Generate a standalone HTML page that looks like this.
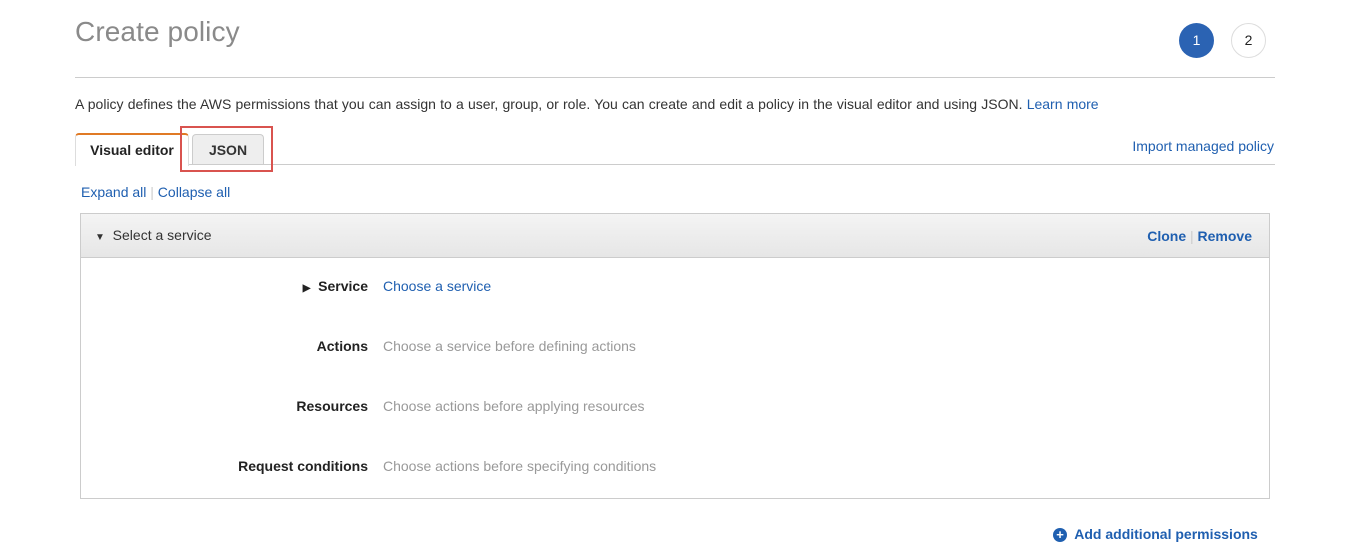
<!DOCTYPE html>
<html><head><style>
body{margin:0;width:1364px;height:538px;overflow:hidden;background:#fff;font-family:"Liberation Sans",Arial,sans-serif;font-size:14px;color:#444;position:relative}
.a{position:absolute;white-space:nowrap}
.l{color:#1f5fb0}
</style></head><body>
<div class="a" style="left:75px;top:16px;font-size:28px;color:#8a8a8a;letter-spacing:0.1px">Create policy</div>
<div class="a" style="left:1179px;top:23px;width:35px;height:35px;border-radius:50%;background:#2b63b3;color:#fff;font-size:14px;text-align:center;line-height:35px">1</div>
<div class="a" style="left:1231px;top:23px;width:33px;height:33px;border-radius:50%;border:1px solid #ddd;color:#222;font-size:14px;text-align:center;line-height:33px">2</div>
<div class="a" style="left:75px;top:77px;width:1200px;height:1px;background:#ccc"></div>
<div class="a" style="left:75px;top:96px;color:#333;word-spacing:0.3px">A policy defines the AWS permissions that you can assign to a user, group, or role. You can create and edit a policy in the visual editor and using JSON. <span class="l">Learn more</span></div>
<div class="a" style="left:75px;top:164px;width:1200px;height:1px;background:#ccc"></div>
<div class="a" style="left:75px;top:133px;width:112px;height:31px;border:1px solid #ddd;border-top:2px solid #e07a25;border-bottom:none;background:#fff;border-radius:4px 4px 0 0;font-weight:bold;color:#222;text-align:center;line-height:31px">Visual editor</div>
<div class="a" style="left:192px;top:134px;width:70px;height:29px;border:1px solid #ccc;border-bottom:none;background:#eee;border-radius:4px 4px 0 0;font-weight:bold;color:#333;text-align:center;line-height:31px">JSON</div>
<div class="a" style="left:180px;top:126px;width:89px;height:42px;border:2px solid #d9534f"></div>
<div class="a l" style="right:90px;top:138px">Import managed policy</div>
<div class="a l" style="left:81px;top:184px">Expand all <span style="color:#ccc">|</span> Collapse all</div>
<div class="a" style="left:80px;top:213px;width:1188px;height:284px;border:1px solid #ccc"></div>
<div class="a" style="left:81px;top:214px;width:1188px;height:43px;background:linear-gradient(#f4f4f4,#e6e6e6);border-bottom:1px solid #ccc"></div>
<div class="a" style="left:95px;top:227px;color:#333"><span style="font-size:10px">&#9660;</span>&nbsp; Select a service</div>
<div class="a l" style="right:112px;top:228px;font-weight:bold">Clone <span style="color:#ccc;font-weight:normal">|</span> Remove</div>
<div class="a" style="right:996px;top:278px;color:#222;font-weight:bold"><span style="font-size:10px">&#9654;</span>&nbsp; Service</div>
<div class="a l" style="left:383px;top:278px">Choose a service</div>
<div class="a" style="right:996px;top:338px;color:#222;font-weight:bold">Actions</div>
<div class="a" style="left:383px;top:338px;color:#999">Choose a service before defining actions</div>
<div class="a" style="right:996px;top:398px;color:#222;font-weight:bold">Resources</div>
<div class="a" style="left:383px;top:398px;color:#999">Choose actions before applying resources</div>
<div class="a" style="right:996px;top:458px;color:#222;font-weight:bold">Request conditions</div>
<div class="a" style="left:383px;top:458px;color:#999">Choose actions before specifying conditions</div>
<div class="a l" style="left:1053px;top:526px;font-weight:bold"><span style="display:inline-block;width:14px;height:14px;border-radius:50%;background:#1f5fb0;color:#fff;text-align:center;line-height:14px;font-size:13px">+</span>&nbsp; Add additional permissions</div>
</body></html>
